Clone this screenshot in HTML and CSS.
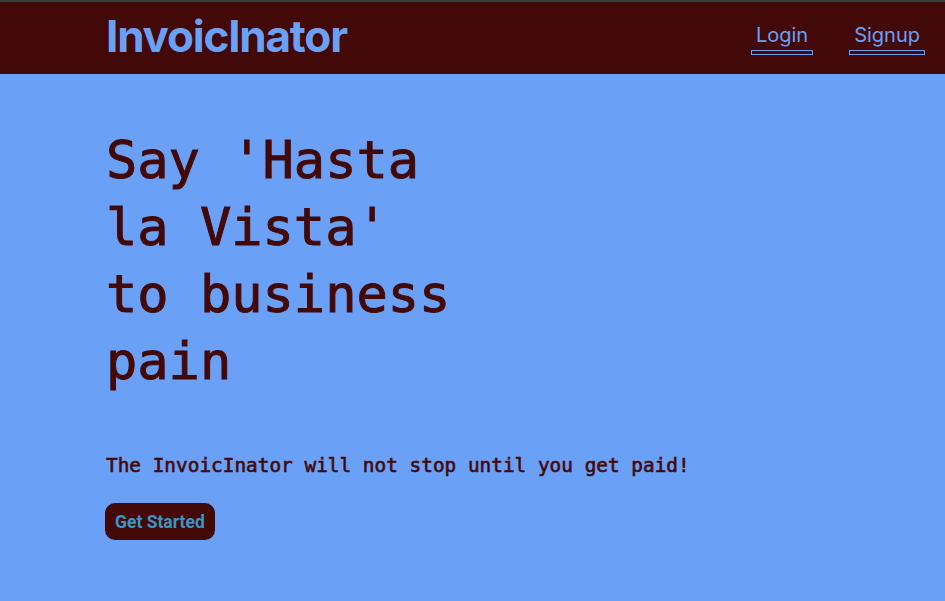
FILE: index.html
```html
<!DOCTYPE html>
<html>
<head>
<meta charset="utf-8">
<link rel="stylesheet" href="styles.css">
</head>
<body>
<header class="topbar">
  <div class="brand">InvoicInator</div>
  <nav class="nav">
    <a class="nav-link" href="#">Login</a>
    <a class="nav-link" href="#">Signup</a>
  </nav>
</header>
<main class="hero">
  <h1 class="hero-title">Say 'Hasta la Vista' to business pain</h1>
  <p class="hero-sub">The InvoicInator will not stop until you get paid!</p>
  <button class="cta">Get Started</button>
</main>
</body>
</html>
```
FILE: styles.css
```css
html, body {
  margin: 0;
  padding: 0;
}
body {
  background: #6ba0f7;
  min-height: 601px;
  font-family: "DejaVu Sans Mono", monospace;
}
.topbar {
  background: #430909;
  border-top: 2px solid #3b3b3b;
  height: 72px;
  box-sizing: content-box;
  display: flex;
  align-items: center;
  justify-content: space-between;
  padding: 0 20px 0 106px;
}
.brand {
  font-family: Inter, sans-serif;
  font-weight: 700;
  font-size: 44px;
  letter-spacing: -1.2px;
  color: #6ba0f7;
  margin-top: -4px;
}
.nav {
  display: flex;
  gap: 36px;
  margin-top: 0;
}
.nav-link {
  display: flex;
  flex-direction: column;
  align-items: center;
  font-family: Inter, sans-serif;
  font-size: 20px;
  line-height: 24px;
  color: #6ba0f7;
  text-decoration: none;
  padding: 2px 5px 0;
}
.nav-link::after {
  content: "";
  align-self: stretch;
  margin: 3px -5px 0;
  height: 3px;
  border: 1px solid #6ba0f7;
}
.hero {
  padding: 53px 0 0 106px;
}
.hero-title {
  margin: 0;
  width: 360px;
  font-family: "DejaVu Sans Mono", monospace;
  font-weight: 400;
  font-size: 52px;
  line-height: 67px;
  color: #430909;
  -webkit-text-stroke: 1px #430909;
}
.hero-sub {
  margin: 59px 0 0;
  font-family: "DejaVu Sans Mono", monospace;
  font-weight: 400;
  font-size: 19.4px;
  color: #430909;
  -webkit-text-stroke: 0.6px #430909;
}
.cta {
  margin-top: 26px;
  margin-left: -1px;
  background: #430909;
  border: none;
  border-radius: 10px;
  height: 37px;
  padding: 0 10px;
  font-family: Roboto, sans-serif;
  font-weight: 700;
  font-size: 17.5px;
  color: #3a96c4;
}
```
